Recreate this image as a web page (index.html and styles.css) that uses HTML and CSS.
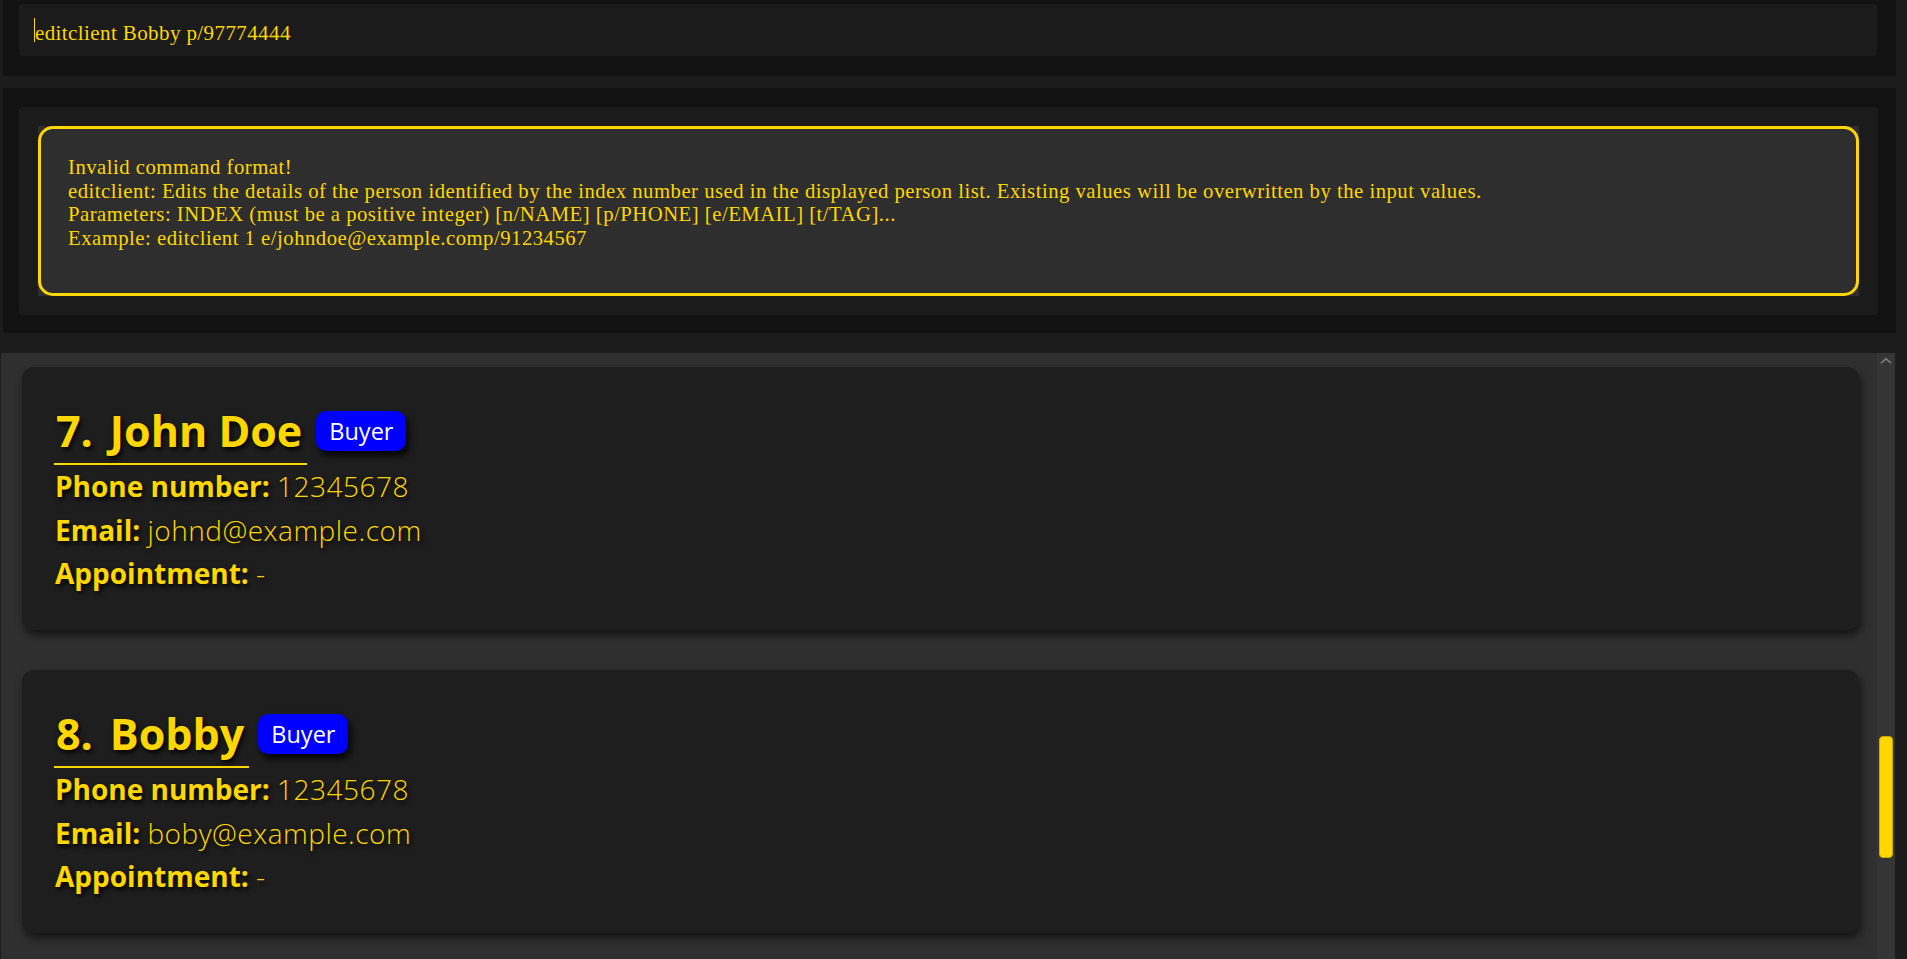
FILE: index.html
```html
<!DOCTYPE html>
<html lang="en">
<head>
<meta charset="utf-8">
<title>Address Book</title>
<link rel="stylesheet" href="styles.css">
</head>
<body>
<div class="app">
  <section class="command-pane">
    <div class="command-box">
      <span class="caret"></span>
      <span class="command-text">editclient Bobby p/97774444</span>
    </div>
  </section>

  <section class="result-pane">
    <div class="result-inner">
      <div class="result-frame">
        <div class="result-box">
          <div class="result-line">Invalid command format!</div>
          <div class="result-line">editclient: Edits the details of the person identified by the index number used in the displayed person list. Existing values will be overwritten by the input values.</div>
          <div class="result-line">Parameters: INDEX (must be a positive integer) [n/NAME] [p/PHONE] [e/EMAIL] [t/TAG]...</div>
          <div class="result-line">Example: editclient 1 e/johndoe@example.comp/91234567</div>
        </div>
      </div>
    </div>
  </section>

  <section class="list-pane">
    <div class="person-list">
      <article class="card">
        <div class="name-row">
          <div class="name-wrap"><span class="index">7.</span><span class="name">John Doe</span></div>
          <span class="tag">Buyer</span>
        </div>
        <div class="field"><span class="label">Phone number:</span> <span class="value">12345678</span></div>
        <div class="field"><span class="label">Email:</span> <span class="value">johnd@example.com</span></div>
        <div class="field"><span class="label">Appointment:</span> <span class="value">-</span></div>
      </article>
      <article class="card">
        <div class="name-row">
          <div class="name-wrap"><span class="index">8.</span><span class="name">Bobby</span></div>
          <span class="tag">Buyer</span>
        </div>
        <div class="field"><span class="label">Phone number:</span> <span class="value">12345678</span></div>
        <div class="field"><span class="label">Email:</span> <span class="value">boby@example.com</span></div>
        <div class="field"><span class="label">Appointment:</span> <span class="value">-</span></div>
      </article>
    </div>
    <div class="scrollbar">
      <svg class="scroll-up" width="12" height="7" viewBox="0 0 12 7"><path d="M0 6 L6 0.5 L12 6 L10.2 6.5 L6 3 L1.8 6.5 Z" fill="#7a7a7a"/></svg>
      <div class="thumb"></div>
    </div>
  </section>
</div>
</body>
</html>
```

FILE: styles.css
```css
html, body {
  margin: 0;
  padding: 0;
}

body {
  background: #1c1c1c;
  width: 1907px;
  height: 959px;
  overflow: hidden;
  font-family: "Liberation Serif", serif;
}

.app {
  display: flex;
  flex-direction: column;
  height: 959px;
  padding: 0 11px 0 1px;
  box-sizing: border-box;
}

/* ---------- command box ---------- */
.command-pane {
  height: 76px;
  box-sizing: border-box;
  margin-left: 2px;
  padding: 4px 19px 20px 16px;
  background: #121212;
}

.command-box {
  height: 52px;
  box-sizing: border-box;
  background: #1b1b1b;
  border-radius: 4px;
  display: flex;
  align-items: center;
  padding: 2px 0 0 15px;
}

.caret {
  width: 1px;
  height: 24px;
  background: #ffd700;
  margin-top: -2px;
}

.command-text {
  font-family: "Liberation Serif", serif;
  font-size: 21px;
  letter-spacing: 0.4px;
  color: #ffd700;
  padding-top: 4px;
}

/* ---------- result display ---------- */
.result-pane {
  margin-top: 12px;
  height: 245px;
  box-sizing: border-box;
  margin-left: 2px;
  padding: 19px 18px 18px 16px;
  background: #121212;
}

.result-inner {
  background: #1b1b1b;
  border-radius: 4px;
  padding: 19px;
  height: 100%;
  box-sizing: border-box;
}

.result-frame {
  background: #2e2e2e;
}

.result-box {
  height: 170px;
  box-sizing: border-box;
  border: 3px solid #ffd700;
  border-radius: 15px;
  padding: 27px 27px 0 27px;
  color: #ffd700;
  font-family: "Liberation Serif", serif;
  font-size: 20.7px;
  letter-spacing: 0.5px;
  line-height: 23.6px;
}

/* ---------- person list ---------- */
.list-pane {
  margin-top: 20px;
  margin-right: 1px;
  flex: 1;
  display: flex;
  background: #2f2f2f;
  overflow: hidden;
}

.person-list {
  flex: 1;
  display: flex;
  flex-direction: column;
  gap: 40px;
  padding: 14px 18px 0 21px;
}

.card {
  height: 263px;
  box-sizing: border-box;
  background: #1e1e1e;
  border-radius: 12px;
  box-shadow: 2px 5px 8px rgba(0, 0, 0, 0.6);
  padding: 38px 0 0 32px;
  font-family: "Open Sans", "Noto Sans", sans-serif;
  color: #ffd700;
  text-shadow: 2px 3px 5px rgba(0, 0, 0, 0.9);
}

.name-row {
  display: flex;
  align-items: flex-start;
}

.name-wrap {
  display: flex;
  padding: 0 5px 6px 2px;
  border-bottom: 2px solid #ffd700;
  font-size: 43px;
  font-weight: 700;
  line-height: 52px;
}

.index {
  margin-right: 17px;
}

.tag {
  margin: 6px 0 0 9px;
  height: 40px;
  padding: 0 13px;
  border-radius: 10px;
  background: #0000ff;
  color: #ffffff;
  font-size: 23.5px;
  line-height: 40px;
  text-shadow: none;
  box-shadow: 3px 5px 7px rgba(0, 0, 0, 0.85);
}

.field {
  font-size: 28px;
  line-height: 43.5px;
  padding-left: 1px;
  white-space: nowrap;
}

.label {
  font-weight: 700;
}

.value {
  font-weight: 300;
  letter-spacing: 0.5px;
}

/* ---------- scrollbar ---------- */
.scrollbar {
  width: 18px;
  background: #353535;
  display: flex;
  flex-direction: column;
  align-items: center;
}

.scroll-up {
  margin-top: 4px;
  display: block;
}

.thumb {
  margin-top: 372px;
  width: 14px;
  height: 122px;
  box-sizing: border-box;
  background: #ffd700;
  border: 1px solid #c9a900;
  border-radius: 4px;
}
```
